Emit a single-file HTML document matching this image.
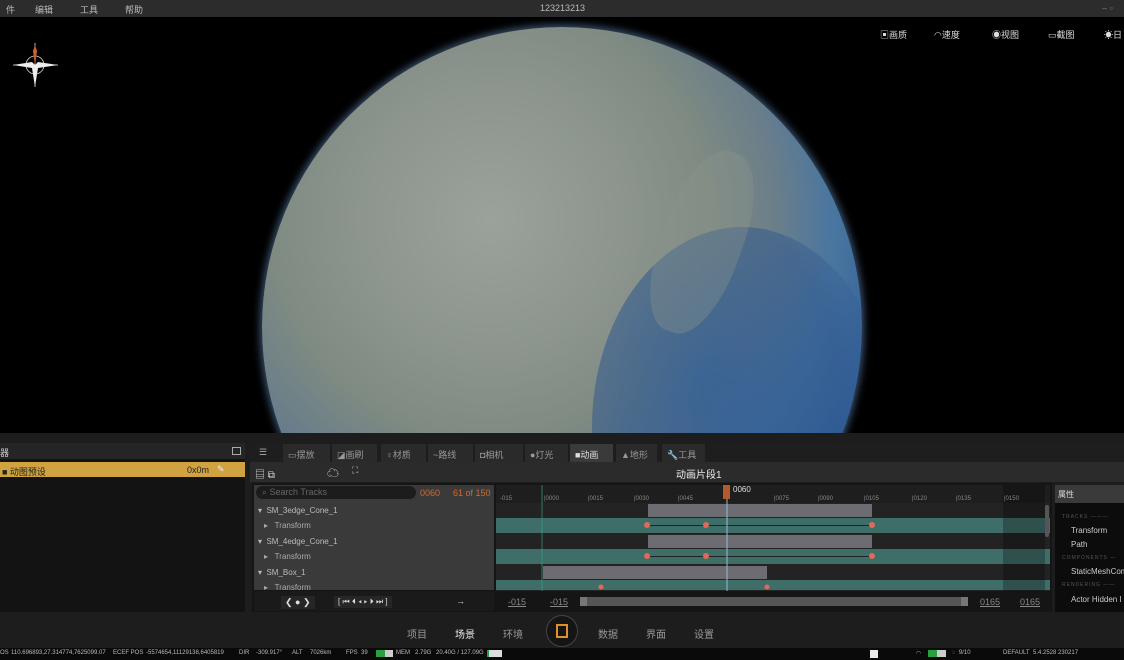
<!DOCTYPE html>
<html><head><meta charset="utf-8"><style>
*{margin:0;padding:0;box-sizing:border-box}
body{width:1124px;height:660px;overflow:hidden;background:#000;font-family:"Liberation Sans","Noto Sans CJK SC",sans-serif;color:#ccc;position:relative}
.a{position:absolute}
.t{font-size:9px;white-space:nowrap}
.s{position:absolute;top:650px;color:#bbb;font-size:6px;white-space:nowrap}
</style></head><body>
<!-- top bar -->
<div class="a" style="left:0;top:0;width:1124px;height:17px;background:#2c2c2c"></div>
<div class="a t" style="left:6px;top:3px;color:#bbb">件</div>
<div class="a t" style="left:35px;top:3px;color:#bbb">编辑</div>
<div class="a t" style="left:80px;top:3px;color:#bbb">工具</div>
<div class="a t" style="left:125px;top:3px;color:#bbb">帮助</div>
<div class="a t" style="left:540px;top:3px;color:#bbb">123213213</div>
<div class="a t" style="left:1102px;top:3px;color:#777">–  ▫</div>
<!-- viewport -->
<div class="a" style="left:0;top:17px;width:1124px;height:416px;background:#000;overflow:hidden">
 <div class="a" style="left:262px;top:10px;width:600px;height:600px;border-radius:50%;overflow:hidden;background:radial-gradient(circle at 38% 32%,#9aa29b 0%,#8c958d 25%,#7e8a82 40%,#6a7e8a 52%,#4a76a0 62%,#33609a 74%,#22466f 86%,#0f213a 100%);box-shadow:0 0 8px 2px rgba(120,170,230,.5)">
  <div class="a" style="left:330px;top:200px;width:300px;height:400px;border-radius:50%;background:radial-gradient(ellipse at 40% 40%,rgba(50,95,150,.85),rgba(45,85,140,.5) 50%,rgba(0,0,0,0) 72%)"></div>
  <div class="a" style="left:400px;top:120px;width:80px;height:190px;border-radius:45%;background:rgba(140,150,140,.35);transform:rotate(20deg)"></div>
 </div>
 <svg class="a" style="left:8px;top:24px" width="56" height="52"><g stroke="#ddd" fill="none" stroke-width=".8"><circle cx="27" cy="24" r="9"/><path d="M27 2V46M5 24H50"/></g><path d="M27 24L24 27L5 24L24 21ZM27 24L30 21L50 24L30 27ZM27 24L24 27L27 46L30 27Z" fill="#eee"/><path d="M27 24L25 10L27 4L29 10Z" fill="#d0602a"/></svg>
 <div class="a t" style="left:880px;top:11px;color:#ddd">▣画质</div>
 <div class="a t" style="left:934px;top:11px;color:#ddd">◠速度</div>
 <div class="a t" style="left:992px;top:11px;color:#ddd">◉视图</div>
 <div class="a t" style="left:1048px;top:11px;color:#ddd">▭截图</div>
 <div class="a t" style="left:1104px;top:11px;color:#ddd">☀日</div>
</div>
<!-- bottom panel bg -->
<div class="a" style="left:0;top:433px;width:1124px;height:215px;background:#1d1d1d"></div>
<!-- left panel -->
<div class="a" style="left:0;top:443px;width:245px;height:169px;background:#131313"></div>
<div class="a" style="left:0;top:443px;width:245px;height:16px;background:#252525"></div>
<div class="a t" style="left:0;top:446px;color:#ccc">器</div>
<div class="a" style="left:232px;top:447px;width:9px;height:8px;border:1px solid #aaa"></div>
<div class="a" style="left:0;top:462px;width:245px;height:15px;background:#d0a240"></div>
<div class="a t" style="left:2px;top:465px;color:#222">■ 动图预设</div>
<div class="a t" style="left:187px;top:465px;color:#222">0x0m</div>
<div class="a t" style="left:217px;top:464px;color:#eee">✎</div>
<!-- right panel -->
<div class="a" style="left:250px;top:443px;width:874px;height:19px;background:#1e1e1e"></div>
<div class="a t" style="left:259px;top:447px;color:#aaa">☰</div>
<div class="a" style="left:283px;top:444px;width:656px;height:18px">
 <span class="a t" style="left:0;top:0;width:47px;height:18px;background:#2a2a2a;padding:4px 5px;color:#999">▭摆放</span>
 <span class="a t" style="left:47px;top:0;width:47px;height:18px;background:#2a2a2a;padding:4px 5px;color:#999;border-left:2px solid #1d1d1d">◪画刷</span>
 <span class="a t" style="left:96px;top:0;width:47px;height:18px;background:#2a2a2a;padding:4px 5px;color:#999;border-left:2px solid #1d1d1d">♀材质</span>
 <span class="a t" style="left:143px;top:0;width:47px;height:18px;background:#2a2a2a;padding:4px 5px;color:#999;border-left:2px solid #1d1d1d">~路线</span>
 <span class="a t" style="left:190px;top:0;width:50px;height:18px;background:#2a2a2a;padding:4px 5px;color:#999;border-left:2px solid #1d1d1d">◘相机</span>
 <span class="a t" style="left:240px;top:0;width:45px;height:18px;background:#2a2a2a;padding:4px 5px;color:#999;border-left:2px solid #1d1d1d">●灯光</span>
 <span class="a t" style="left:285px;top:0;width:45px;height:18px;background:#3a3a3a;padding:4px 5px;color:#ddd;border-left:2px solid #1d1d1d">■动画</span>
 <span class="a t" style="left:331px;top:0;width:43px;height:18px;background:#2a2a2a;padding:4px 5px;color:#999;border-left:2px solid #1d1d1d">▲地形</span>
 <span class="a t" style="left:377px;top:0;width:45px;height:18px;background:#2a2a2a;padding:4px 5px;color:#999;border-left:2px solid #1d1d1d">🔧工具</span>
</div>
<div class="a" style="left:250px;top:462px;width:874px;height:20px;background:#2b2b2b"></div>
<div class="a t" style="left:255px;top:466px;color:#ddd;font-size:10px">▤ ⧉</div>
<div class="a t" style="left:327px;top:464px;color:#ddd;font-size:12px">☁</div>
<div class="a t" style="left:352px;top:465px;color:#ccc">⛶</div>
<div class="a t" style="left:676px;top:466px;color:#eee;font-size:10px">动画片段1</div>
<!-- track area -->
<div class="a" style="left:252px;top:483px;width:800px;height:129px;background:#151515"></div>
<div class="a" style="left:254px;top:485px;width:240px;height:105px;background:#3a3a3a"></div>
<div class="a" style="left:256px;top:486px;width:160px;height:13px;border-radius:7px;background:#1c1c1c"></div>
<div class="a t" style="left:262px;top:487px;color:#666">⌕ Search Tracks</div>
<div class="a t" style="left:420px;top:488px;color:#d06a30">0060</div>
<div class="a t" style="left:453px;top:488px;color:#d06a30">61 of 150</div>
<div class="a t" style="left:258px;top:506px;color:#bbb;font-size:8px">▾ &nbsp;SM_3edge_Cone_1</div>
<div class="a t" style="left:264px;top:521px;color:#aaa;font-size:8px">▸ &nbsp;&nbsp;Transform</div>
<div class="a t" style="left:258px;top:537px;color:#bbb;font-size:8px">▾ &nbsp;SM_4edge_Cone_1</div>
<div class="a t" style="left:264px;top:552px;color:#aaa;font-size:8px">▸ &nbsp;&nbsp;Transform</div>
<div class="a t" style="left:258px;top:568px;color:#bbb;font-size:8px">▾ &nbsp;SM_Box_1</div>
<div class="a t" style="left:264px;top:583px;color:#aaa;font-size:8px">▸ &nbsp;&nbsp;Transform</div>
<div class="a" style="left:254px;top:591px;width:240px;height:20px;background:#1a1a1a"></div>
<div class="a t" style="left:281px;top:596px;color:#ddd;background:#262626;padding:1px 4px">❮ ● ❯</div>
<div class="a t" style="left:334px;top:596px;color:#ddd;background:#262626;padding:1px 4px;font-size:8px">[ ⏮ ⏴ ◂ ▸ ⏵ ⏭ ]</div>
<div class="a t" style="left:456px;top:596px;color:#ddd">→</div>
<!-- timeline -->
<div class="a" style="left:496px;top:485px;width:554px;height:18px;background:#1e1e1e"></div>
<div class="a" style="left:496px;top:503px;width:554px;height:88px;background:#232323"></div>
<div class="a" style="left:496px;top:518px;width:554px;height:15px;background:#3f6d68"></div>
<div class="a" style="left:496px;top:549px;width:554px;height:15px;background:#3f6d68"></div>
<div class="a" style="left:496px;top:580px;width:554px;height:10px;background:#3f6d68"></div>
<div class="a" style="left:1003px;top:485px;width:42px;height:106px;background:rgba(0,0,0,.25)"></div>
<div class="a" style="left:648px;top:504px;width:224px;height:13px;background:#6c6c72"></div>
<div class="a" style="left:648px;top:535px;width:224px;height:13px;background:#6c6c72"></div>
<div class="a" style="left:543px;top:566px;width:224px;height:13px;background:#6c6c72"></div>
<div class="a" style="left:647px;top:525px;width:226px;height:1px;background:#222"></div>
<div class="a" style="left:647px;top:556px;width:226px;height:1px;background:#222"></div>
<svg class="a" style="left:496px;top:485px" width="554" height="106">
<g fill="#e06a5a"><circle cx="151" cy="40" r="3"/><circle cx="210" cy="40" r="3"/><circle cx="376" cy="40" r="3"/><circle cx="151" cy="71" r="3"/><circle cx="210" cy="71" r="3"/><circle cx="376" cy="71" r="3"/><circle cx="105" cy="102" r="2.5"/><circle cx="271" cy="102" r="2.5"/></g>
<g font-size="6" fill="#888" font-family="Liberation Sans"><text x="4" y="15">-015</text><text x="48" y="15">|0000</text><text x="92" y="15">|0015</text><text x="138" y="15">|0030</text><text x="182" y="15">|0045</text><text x="278" y="15">|0075</text><text x="322" y="15">|0090</text><text x="368" y="15">|0105</text><text x="416" y="15">|0120</text><text x="460" y="15">|0135</text><text x="508" y="15">|0150</text></g>
<line x1="46" y1="0" x2="46" y2="106" stroke="#3aa08a" stroke-width=".7"/>
<line x1="231" y1="8" x2="231" y2="106" stroke="#9bc" stroke-width="1"/>
<rect x="227" y="0" width="7" height="14" fill="#b45a2a"/>
<text x="237" y="7" font-size="8" fill="#ddd" font-family="Liberation Sans">0060</text>
<rect x="549" y="20" width="4" height="32" rx="2" fill="#555"/>
</svg>
<div class="a t" style="left:508px;top:597px;color:#888;text-decoration:underline">-015</div>
<div class="a t" style="left:550px;top:597px;color:#888;text-decoration:underline">-015</div>
<div class="a" style="left:580px;top:597px;width:388px;height:9px;background:#555;border-left:7px solid #777;border-right:7px solid #777"></div>
<div class="a t" style="left:980px;top:597px;color:#888;text-decoration:underline">0165</div>
<div class="a t" style="left:1020px;top:597px;color:#888;text-decoration:underline">0165</div>
<!-- properties -->
<div class="a" style="left:1055px;top:485px;width:69px;height:127px;background:#0c0c0c"></div>
<div class="a" style="left:1055px;top:485px;width:69px;height:18px;background:#3a3a3a"></div>
<div class="a t" style="left:1058px;top:489px;color:#ddd;font-size:8px">属性</div>
<div class="a t" style="left:1062px;top:514px;color:#555;font-size:5px;letter-spacing:1px">TRACKS ———</div>
<div class="a t" style="left:1071px;top:526px;color:#ccc;font-size:8px">Transform</div>
<div class="a t" style="left:1071px;top:540px;color:#ccc;font-size:8px">Path</div>
<div class="a t" style="left:1062px;top:555px;color:#555;font-size:5px;letter-spacing:1px">COMPONENTS —</div>
<div class="a t" style="left:1071px;top:567px;color:#ccc;font-size:8px">StaticMeshCom</div>
<div class="a t" style="left:1062px;top:582px;color:#555;font-size:5px;letter-spacing:1px">RENDERING ——</div>
<div class="a t" style="left:1071px;top:595px;color:#ccc;font-size:8px">Actor Hidden I</div>
<!-- bottom nav -->
<div class="a t" style="left:407px;top:626px;color:#999;font-size:10px">项目</div>
<div class="a t" style="left:455px;top:626px;color:#eee;font-size:10px">场景</div>
<div class="a t" style="left:503px;top:626px;color:#999;font-size:10px">环境</div>
<div class="a" style="left:546px;top:615px;width:32px;height:32px;border-radius:50%;border:1px solid #444;background:#151515"></div>
<div class="a" style="left:556px;top:624px;width:12px;height:14px;border:2px solid #e0902a"></div>
<div class="a t" style="left:598px;top:626px;color:#999;font-size:10px">数据</div>
<div class="a t" style="left:646px;top:626px;color:#999;font-size:10px">界面</div>
<div class="a t" style="left:694px;top:626px;color:#999;font-size:10px">设置</div>
<!-- status bar -->
<div class="a" style="left:0;top:648px;width:1124px;height:12px;background:#0a0a0a"></div>
<div class="s" style="left:0">OS</div>
<div class="s" style="left:11px">110.696893,27.314774,7625099.07</div>
<div class="s" style="left:113px">ECEF POS</div>
<div class="s" style="left:146px">-5574654,11129138,6405819</div>
<div class="s" style="left:239px">DIR</div>
<div class="s" style="left:256px">-309.917°</div>
<div class="s" style="left:292px">ALT</div>
<div class="s" style="left:310px">7026km</div>
<div class="s" style="left:346px">FPS</div>
<div class="s" style="left:361px">39</div>
<div class="a" style="left:376px;top:650px;width:17px;height:7px;background:#ccc;border-left:9px solid #2aa040"></div>
<div class="s" style="left:396px">MEM</div>
<div class="s" style="left:415px">2.79G</div>
<div class="s" style="left:436px">20.40G / 127.09G</div>
<div class="a" style="left:487px;top:650px;width:15px;height:7px;background:#ddd;border-left:2px solid #2aa040"></div>
<div class="a" style="left:870px;top:650px;width:8px;height:8px;background:#eee"></div>
<div class="a" style="left:928px;top:650px;width:18px;height:7px;background:#ccc;border-left:9px solid #2aa040"></div>
<div class="s" style="left:916px">◠</div>
<div class="s" style="left:952px">◌ &nbsp;9/10</div>
<div class="s" style="left:1003px">DEFAULT</div>
<div class="s" style="left:1033px">5.4.2528 230217</div>
</body></html>
